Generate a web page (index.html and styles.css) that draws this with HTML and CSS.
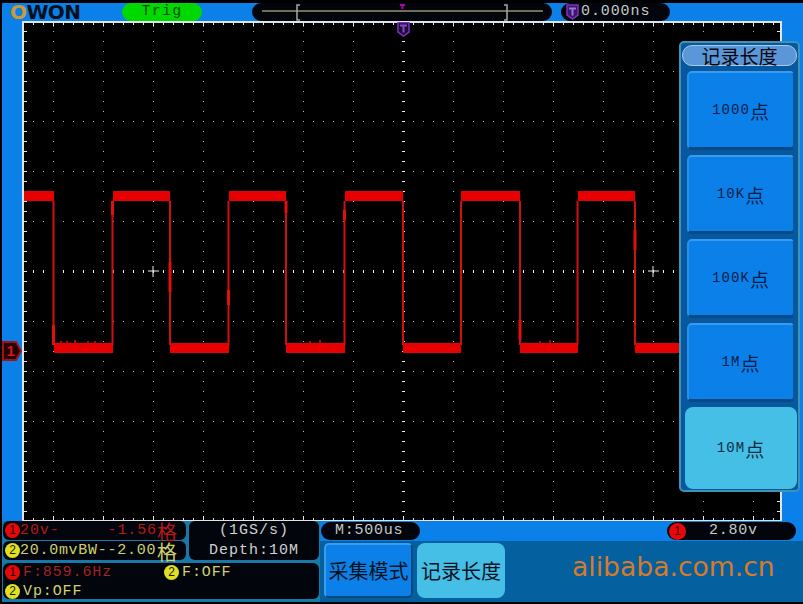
FILE: index.html
```html
<!DOCTYPE html>
<html lang="zh">
<head>
<meta charset="utf-8">
<title>Oscilloscope</title>
<link rel="stylesheet" href="styles.css">
</head>
<body>
<div class="frame">
  <header class="top">
    <div class="logo"><span class="logo-o">O</span>WON</div>
    <div class="trig">Trig</div>
    <div class="timeline">
      <svg class="timeline-svg" width="300" height="18" viewBox="252 3 300 18">
        <rect x="262" y="10.5" width="281" height="1" fill="#d8d8a0"/>
        <path d="M300 5h-3v15h3M504 5h3v15h-3" fill="none" stroke="#a8a8a8" stroke-width="1.5"/>
        <path d="M400 4h5v2h-1.500v3h-2v-3h-1.500z" fill="#b000b0"/>
      </svg>
    </div>
    <div class="offset">
      <svg class="shield" width="13" height="16" viewBox="0 0 13 16">
        <path d="M1 1h11v10l-5.500 4l-5.500-4z" fill="#3a1a68" stroke="#8030c0" stroke-width="1.500"/>
        <path d="M3 3.500h7v2h-2.500v6h-2v-6h-2.500z" fill="#a070e0"/>
      </svg>
      <span>0.000ns</span>
    </div>
  </header>

  <main class="scope">
    <svg class="plot" width="756" height="497" viewBox="24 23 756 497">
      <defs>
        <pattern id="dot-v" patternUnits="userSpaceOnUse" x="3" y="21" width="50" height="10"><rect width="1" height="1" fill="#b8b8b8"/></pattern>
        <pattern id="dot-h" patternUnits="userSpaceOnUse" x="23" y="21" width="10" height="50"><rect width="1" height="1" fill="#b8b8b8"/></pattern>
        <pattern id="tick-top" patternUnits="userSpaceOnUse" x="3" y="23" width="50" height="4"><path d="M0 0h1v3.500h-1zM10 0h1v2h-1zM20 0h1v2h-1zM30 0h1v2h-1zM40 0h1v2h-1z" fill="#e8e8e8"/></pattern>
        <pattern id="tick-bot" patternUnits="userSpaceOnUse" x="3" y="516" width="50" height="4"><path d="M0 0h1v4h-1zM10 2h1v2h-1zM20 2h1v2h-1zM30 2h1v2h-1zM40 2h1v2h-1z" fill="#e8e8e8"/></pattern>
        <pattern id="tick-left" patternUnits="userSpaceOnUse" x="24" y="21" width="4" height="10"><rect width="3" height="1" fill="#e8e8e8"/></pattern>
        <pattern id="tick-right" patternUnits="userSpaceOnUse" x="776" y="21" width="4" height="10"><rect x="1" width="3" height="1" fill="#e8e8e8"/></pattern>
        <pattern id="dash-h" patternUnits="userSpaceOnUse" x="23" y="270" width="10" height="3"><rect width="1" height="3" fill="#f0f0f0"/></pattern>
        <pattern id="dash-v" patternUnits="userSpaceOnUse" x="402" y="21" width="3" height="10"><rect width="3" height="1" fill="#f0f0f0"/></pattern>
      </defs>
      <rect x="24" y="23" width="756" height="497" fill="#000"/>
      <rect x="24" y="23" width="756" height="497" fill="url(#dot-v)"/>
      <rect x="24" y="23" width="756" height="497" fill="url(#dot-h)"/>
      <rect x="24" y="270" width="756" height="3" fill="url(#dash-h)"/>
      <rect x="402" y="38" width="3" height="482" fill="url(#dash-v)"/>
      <rect x="24" y="23" width="756" height="4" fill="url(#tick-top)"/>
      <rect x="24" y="516" width="756" height="4" fill="url(#tick-bot)"/>
      <rect x="24" y="23" width="4" height="497" fill="url(#tick-left)"/>
      <rect x="776" y="23" width="4" height="497" fill="url(#tick-right)"/>
      <path d="M148 271h11M153 266v11M648 271h11M653 266v11" stroke="#f0f0f0" stroke-width="1"/>
      <g fill="#e60000">
        <rect x="24" y="191" width="30" height="10"/><rect x="54" y="343" width="59" height="10"/>
        <rect x="113" y="191" width="57" height="10"/><rect x="170" y="343" width="59" height="10"/>
        <rect x="229" y="191" width="57" height="10"/><rect x="286" y="343" width="59" height="10"/>
        <rect x="345" y="191" width="58" height="10"/><rect x="403" y="343" width="58" height="10"/>
        <rect x="461" y="191" width="59" height="10"/><rect x="520" y="343" width="58" height="10"/>
        <rect x="578" y="191" width="57" height="10"/><rect x="635" y="343" width="45" height="10"/>
      </g>
      <path d="M53.500 201V345M112.500 201V345M170 201V345M228.500 201V345M286 201V345M344.500 201V345M403 201V345M461 201V345M520 201V345M577.500 201V345M635 201V345" stroke="#d01010" stroke-width="2" fill="none"/>
      <path d="M53.500 325v20M112.500 201v14M170 262v30M228.500 290v15M286 201v12M344.500 210v10M520 320v20M635 230v20" stroke="#e01010" stroke-width="3" fill="none"/>
      <path d="M61 341v2M67 341v2M75 340v3M88 341v2M95 341v2M310 341v2M320 340v3M540 341v2M550 340v3" stroke="#d81010" stroke-width="1.500" fill="none"/>
    </svg>

    <svg class="trig-mark" width="13" height="15" viewBox="0 0 13 15">
      <path d="M1 0.500h11v9.500l-5.500 4l-5.500-4z" fill="#1c0c3a" stroke="#8030c0" stroke-width="1.500"/>
      <path d="M3 2.500h7v2h-2.500v6h-2v-6h-2.500z" fill="#8a48c8"/>
    </svg>
    <svg class="ch-mark" width="20" height="20" viewBox="0 0 20 20">
      <path d="M1 1h13l5 9l-5 9h-13z" fill="#200404" stroke="#a81010" stroke-width="2"/>
      <text x="4.500" y="15" class="ch-mark-text">1</text>
    </svg>

    <aside class="menu">
      <div class="menu-title">记录长度</div>
      <div class="menu-btn">1000<span class="dian">点</span></div>
      <div class="menu-btn">10K<span class="dian">点</span></div>
      <div class="menu-btn">100K<span class="dian">点</span></div>
      <div class="menu-btn">1M<span class="dian">点</span></div>
      <div class="menu-btn is-active">10M<span class="dian">点</span></div>
    </aside>
  </main>

  <footer class="bottom">
    <section class="status">
      <div class="box ch1-line red">
        <span class="badge badge-red">1</span><span class="grow">20v-</span><span>-1.56</span><span class="cjk">格</span>
      </div>
      <div class="box sample">
        <div>(1GS/s)</div>
        <div>Depth:10M</div>
      </div>
      <div class="box ch2-line yellow">
        <span class="badge badge-yellow">2</span><span class="grow">20.0mvBW--2.00</span><span class="cjk">格</span>
      </div>
      <div class="box measure">
        <div class="measure-cell red"><span class="badge badge-red">1</span><span>F:859.6Hz</span></div>
        <div class="measure-cell yellow"><span class="badge badge-yellow">2</span><span>F:OFF</span></div>
        <div class="measure-cell yellow"><span class="badge badge-yellow">2</span><span>Vp:OFF</span></div>
      </div>
    </section>
    <section class="controls">
      <div class="pills">
        <div class="pill pill-m">M:500us</div>
        <div class="pill pill-level"><span class="badge badge-bright">1</span><span class="level">2.80v</span></div>
      </div>
      <div class="softbar">
        <div class="soft-btn">采集模式</div>
        <div class="soft-btn is-active">记录长度</div>
        <div class="brand">alibaba.com.cn</div>
      </div>
    </section>
  </footer>
</div>
</body>
</html>
```
FILE: styles.css
```css
* { box-sizing: border-box; }
html, body { margin: 0; padding: 0; background: #000; }
body { width: 803px; height: 604px; overflow: hidden; padding: 3px 0 2px 2px; }

.frame {
  position: relative;
  width: 801px;
  height: 599px;
  background: #0a80e8;
  display: flex;
  flex-direction: column;
  font-family: "Liberation Mono", monospace;
}

/* header */
.top { height: 18px; display: flex; align-items: flex-start; position: relative; }
.logo {
  width: 120px;
  padding-left: 8px;
  height: 18px;
  font: bold 20px/18px "DejaVu Sans", sans-serif;
  color: #03101c;
  letter-spacing: -0.6px;
  white-space: nowrap;
}
.logo-o { color: #c99a35; }
.trig {
  width: 80px;
  height: 18px;
  border-radius: 9px;
  background: #00d800;
  color: #0a4a0a;
  font-size: 15px;
  line-height: 18px;
  text-align: center;
  letter-spacing: 1.2px;
}
.timeline {
  margin-left: 50px;
  width: 300px;
  height: 18px;
  border-radius: 9px;
  background: #02060c;
}
.timeline-svg { display: block; }
.offset {
  margin-left: 9px;
  width: 109px;
  height: 18px;
  border-radius: 9px;
  background: #02060c;
  color: #c8c8c8;
  font-size: 15px;
  line-height: 18px;
  display: flex;
  align-items: center;
  padding-left: 5px;
  letter-spacing: 0.9px;
}
.shield { flex: none; margin-right: 2px; }

/* scope */
.scope { position: relative; padding-left: 20px; height: 500px; }
.plot {
  display: block;
  box-sizing: content-box;
  border: solid #dce6e6;
  border-width: 2px 2px 1px 2px;
}
.trig-mark { position: absolute; left: 395px; top: 1px; }
.ch-mark { position: absolute; left: 0; top: 320px; }
.ch-mark-text { font: bold 15px "Liberation Sans", sans-serif; fill: #d81818; }

/* right menu */
.menu {
  position: absolute;
  left: 677px;
  top: 20px;
  width: 121px;
  height: 451px;
  border: 2px solid #3f93b4;
  border-radius: 5px;
  background: #07589e;
  padding: 2px 1px 0;
  display: flex;
  flex-direction: column;
  align-items: center;
}
.menu-title {
  width: 115px;
  height: 21px;
  flex: none;
  border-radius: 10px;
  background: #5a96d8;
  border: 1px solid #a8cce8;
  color: #06060e;
  font: 19px/19px "Noto Sans CJK SC", sans-serif;
  text-align: center;
}
.menu-btn {
  flex: none;
  width: 108px;
  height: 79px;
  margin-top: 5px;
  margin-left: 2px;
  border-radius: 5px;
  background: #0a80e8;
  border-top: 2px solid #3a9cf0;
  border-left: 2px solid #2a90ec;
  border-bottom: 3px solid #084a88;
  border-right: 2px solid #08589c;
  color: #081c48;
  font: 14px/1 "Liberation Mono", monospace;
  letter-spacing: 1.1px;
  display: flex;
  align-items: center;
  justify-content: center;
}
.dian { font: 19px/1 "Noto Sans CJK SC", sans-serif; letter-spacing: 0; }
.menu-btn.is-active {
  height: 82px;
  width: 112px;
  background: #45bfe6;
  border: 0;
  border-radius: 8px;
  color: #0c2a40;
}

/* footer */
.bottom { flex: 1; display: flex; background: #1878a8; }
.status {
  width: 318px;
  padding: 0 0 1px 1px;
  display: grid;
  grid-template-columns: 183px 130px;
  grid-template-rows: 19px 19px 38px;
  column-gap: 3px;
  row-gap: 1px;
}
.box { background: #02060c; border-radius: 6px; font-size: 15px; letter-spacing: 0.9px; }
.ch1-line, .ch2-line { display: flex; align-items: center; padding: 0 9px 0 2px; }
.ch1-line { grid-row: 1; grid-column: 1; }
.ch2-line { grid-row: 2; grid-column: 1; letter-spacing: 0.72px; }
.grow { flex: 1; }
.cjk { font: 20px/18px "Noto Sans CJK SC", sans-serif; letter-spacing: 0; padding-top: 2px; }
.sample {
  grid-column: 2;
  grid-row: 1 / span 2;
  color: #d0d0d0;
  text-align: center;
  line-height: 20px;
  letter-spacing: 1px;
}
.measure {
  grid-column: 1 / span 2;
  display: grid;
  grid-template-columns: 159px 1fr;
  grid-template-rows: 19px 19px;
  margin-top: 2px;
  padding-left: 2px;
}
.measure-cell { display: flex; align-items: center; gap: 3px; }
.red { color: #b81818; }
.yellow { color: #d0d070; }
.measure-cell.red { color: #a82020; }
.badge {
  flex: none;
  width: 15px;
  height: 15px;
  border-radius: 50%;
  font: 12px/15px "Liberation Sans", sans-serif;
  text-align: center;
  letter-spacing: 0;
  color: #2a0000;
}
.badge-red { background: #e80808; }
.badge-yellow { background: #e0e020; color: #1a1a00; }
.badge-bright { background: #e80808; color: #400; width: 17px; height: 17px; line-height: 17px; }

.controls { flex: 1; display: flex; flex-direction: column; background: #0a80e8; }
.pills { height: 20px; display: flex; padding: 1px 7px 1px 1px; justify-content: space-between; }
.pill {
  height: 18px;
  border-radius: 9px;
  background: #02060c;
  color: #c8c8c8;
  font-size: 15px;
  line-height: 18px;
  letter-spacing: 0.75px;
}
.pill-m { width: 99px; padding-left: 14px; }
.pill-level { width: 129px; display: flex; align-items: center; padding-left: 2px; }
.level { margin-left: 23px; }
.softbar {
  flex: 1;
  background: #05609f;
  display: flex;
  align-items: flex-start;
  padding: 2px 0 0 4px;
  gap: 4px;
}
.soft-btn {
  width: 89px;
  height: 55px;
  border-radius: 5px;
  background: #0a80e8;
  border-top: 2px solid #3a9cf0;
  border-left: 2px solid #3a9cf0;
  border-right: 2px solid #08487c;
  border-bottom: 2px solid #08487c;
  color: #06121e;
  font: 20px/52px "Noto Sans CJK SC", sans-serif;
  text-align: center;
  white-space: nowrap;
}
.soft-btn.is-active { background: #45bfe6; border: 0; border-radius: 8px; width: 88px; line-height: 55px; }
.brand {
  margin: 6px 0 0 63px;
  color: #d87a28;
  font: 26.6px/36px "DejaVu Sans", sans-serif;
  white-space: nowrap;
}
```
